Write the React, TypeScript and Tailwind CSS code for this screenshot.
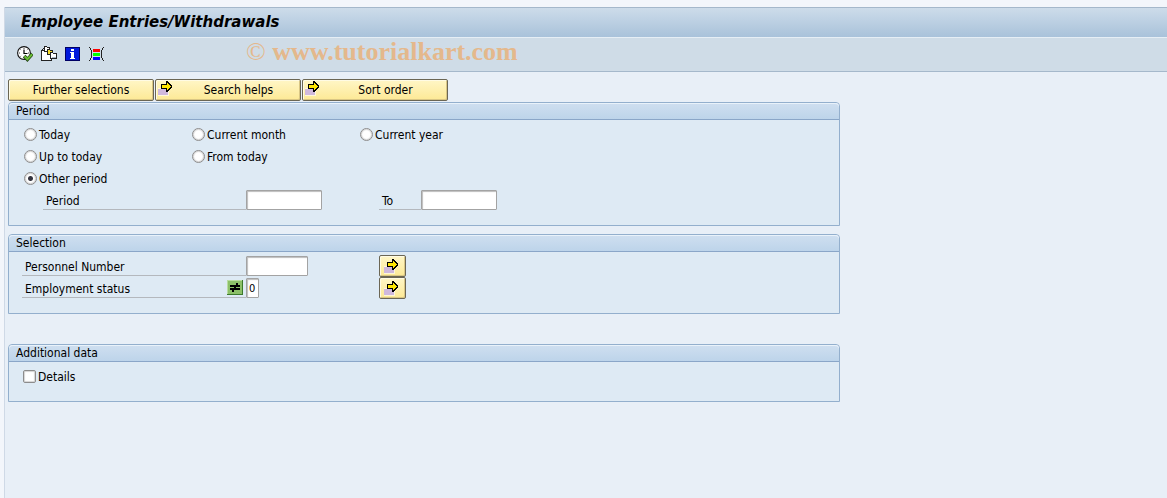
import type { ReactNode } from 'react';

function ExecuteIcon() {
  return (
    <svg width="16" height="16" viewBox="0 0 16 16" aria-hidden="true">
      <circle cx="7" cy="7" r="6.4" fill="#fff" stroke="#111" strokeWidth="1.1" />
      <path d="M7 2v1M7 11v1M2 7h1M11 7h1M3.5 3.5l.6.6M10.5 3.5l-.6.6M3.5 10.5l.6-.6" stroke="#444" strokeWidth="1" />
      <path d="M7 3.5v4h3.5" fill="none" stroke="#000" strokeWidth="1.2" />
      <path d="M7.2 10l3.2 3.4 5-5.5" fill="none" stroke="#1c3a10" strokeWidth="3.4" />
      <path d="M7.6 10.3l2.8 3 4.7-5.1" fill="none" stroke="#6abf35" strokeWidth="2.1" />
    </svg>
  );
}

function VariantIcon() {
  return (
    <svg width="16" height="16" viewBox="0 0 16 16" shapeRendering="crispEdges" aria-hidden="true">
      <path d="M3 2h2v2h5v11H1V4h2z" fill="#fff" />
      <path d="M0 4h1v11H0zM0 14h11v1H0zM10 12h1v3h-1zM1 3h1v1H1zM2 2h1v1H2zM3 1h1v3H3zM1 4h3v1H1z" fill="#222" />
      <path d="M3 0h3v1h3v5H3z" fill="#222" />
      <path d="M4 1h2v1h2v3H4z" fill="#fff" />
      <path d="M6 3h3v1h3v5H6z" fill="#222" />
      <path d="M7 4h2v1h2v3H7z" fill="#f7dc28" />
      <path d="M9 6h3v1h4v6H9z" fill="#222" />
      <path d="M10 7h2v1h3v4h-5z" fill="#fff" />
      <path d="M11 11h4v1h-4z" fill="#aab6c4" />
    </svg>
  );
}

function InfoIcon() {
  return (
    <svg width="16" height="16" viewBox="0 0 16 16" shapeRendering="crispEdges" aria-hidden="true">
      <path d="M0 1h15v14H0z" fill="#000064" />
      <path d="M1 2h13v12H1z" fill="#0018dc" />
      <path d="M6 3h3v2H6zM5 6h4v6h1v1H5v-1h1V7H5z" fill="#fff" />
    </svg>
  );
}

function SelectionOptionsIcon() {
  return (
    <svg width="16" height="16" viewBox="0 0 16 16" shapeRendering="crispEdges" aria-hidden="true">
      <path d="M0 1h1v1H0zM1 2h1v2H1zM2 4h1v8H2zM1 12h1v2H1zM0 14h1v1H0zM14 1h1v1h-1zM13 2h1v2h-1zM12 4h1v8h-1zM13 12h1v2h-1zM14 14h1v1h-1z" fill="#222" />
      <path d="M4 3h7v3H4z" fill="#f00" />
      <path d="M4 7h7v3H4z" fill="#0f0" />
      <path d="M4 11h7v3H4z" fill="#00f" />
    </svg>
  );
}

function ArrowIcon() {
  return (
    <svg width="15" height="15" viewBox="0 0 15 15" shapeRendering="crispEdges" aria-hidden="true">
      <path d="M0 7h11v8H0z" fill="#fff" opacity=".6" />
      <path d="M0 8h10v6H0z" fill="#d0b9dc" />
      <path d="M3 3h5V0h2v1h1v1h1v1h1v1h1v3h-1v1h-1v1h-1v1h-1v1H8V8H3z" fill="#000" />
      <path d="M4 4h5V2h1v1h1v1h1v1h1v1h-1v1h-1v1h-1v1H9V7H4z" fill="#ffe600" />
    </svg>
  );
}

function NotEqualIcon() {
  return (
    <svg width="16" height="15" viewBox="0 0 16 15" shapeRendering="crispEdges" role="img" aria-label="Not equal">
      <path d="M0 0h16v15H0z" fill="#3c7a2c" />
      <path d="M0 0h15v14H0z" fill="#b8dca0" />
      <path d="M1 1h14v13H1z" fill="#8cc068" />
      <path d="M3 5h10v2H3zM3 8h10v2H3zM9 3h2v2H9zM8 5h2v2H8zM7 7h2v1H7zM6 8h2v2H6zM5 10h2v2H5z" fill="#000" />
    </svg>
  );
}

const yellow =
  'rounded-xs border border-[#6b6654] bg-linear-to-b from-[#fff6c6] to-[#fde995] shadow-[inset_1px_1px_0_#fffbe4,inset_-1px_-1px_0_#d9c684]';

function ActionButton({ arrow, children }: { arrow?: boolean; children: ReactNode }) {
  return (
    <button type="button" className={`flex h-[22px] w-[146px] items-center px-0.5 ${yellow}`}>
      {arrow && (
        <span className="mr-1.5 -mt-1 shrink-0">
          <ArrowIcon />
        </span>
      )}
      <span className="grow text-center">{children}</span>
    </button>
  );
}

function MultipleButton({ label }: { label: string }) {
  return (
    <button type="button" aria-label={label} className={`flex h-[22px] w-[27px] items-center pl-1 ${yellow}`}>
      <ArrowIcon />
    </button>
  );
}

function Panel({ title, className, children }: { title: string; className?: string; children: ReactNode }) {
  return (
    <section className={`max-w-[832px] rounded-t-sm border border-[#93afcd] bg-[#deeaf4] ${className ?? ''}`}>
      <h2 className="h-[17px] rounded-t-sm border-b border-[#8aa6c8] bg-linear-to-b from-[#cfdff0] to-[#bdd4ea] px-[7px] leading-4 shadow-[inset_0_1px_0_#e9f2fa]">
        {title}
      </h2>
      {children}
    </section>
  );
}

function Radio({ label, checked }: { label: string; checked?: boolean }) {
  return (
    <label className="flex h-[22px] items-center gap-0.5">
      <input
        type="radio"
        name="period"
        defaultChecked={checked}
        className="size-[13px] appearance-none rounded-full border border-[#8c8c8c] bg-white shadow-[inset_0_0_1px_1px_#d4d4d4] checked:bg-[radial-gradient(circle,#34343f_0_2px,#fff_3px)]"
      />
      <span className="pt-0.5">{label}</span>
    </label>
  );
}

const field =
  'h-5 rounded-[1px] border border-[#a3a3a3] bg-white shadow-[inset_1px_1px_1px_#bdbdbd] px-0.5 outline-none';
const caption = 'flex h-5 items-center border-b border-[#b4b8bd] px-[3px]';

export default function App() {
  return (
    <div className="flex min-h-screen flex-col bg-[#f3f6fb] pt-[7px] pl-1 font-['DejaVu_Sans_Condensed','DejaVu_Sans',sans-serif] text-[12px] leading-4 text-black">
      <div className="grow border-l border-[#cfd9e6] bg-[#e8eff7]">
        <header className="border-b border-[#a5b8cb] bg-[#cfdce7]">
          <h1 className="flex h-[31px] items-center border-t border-b border-t-[#a5b8cb] border-b-[#e6eef5] bg-linear-to-b from-[#cddcea] to-[#a9c2da] px-4 pb-0.5 font-['DejaVu_Sans',sans-serif] text-[15px] font-bold italic">
            Employee Entries/Withdrawals
          </h1>
          <div className="flex h-[33px] items-center px-3 pb-0.5">
            <div className="flex gap-2">
              <button type="button" aria-label="Execute"><ExecuteIcon /></button>
              <button type="button" aria-label="Get variant"><VariantIcon /></button>
              <button type="button" aria-label="Program documentation"><InfoIcon /></button>
              <button type="button" aria-label="Dynamic selections"><SelectionOptionsIcon /></button>
            </div>
            <p className="ml-[141px] pb-1 font-['Liberation_Serif',serif] text-[26px] leading-7 whitespace-nowrap text-[#e4b88c]">
              © <b>www.tutorialkart.com</b>
            </p>
          </div>
        </header>

        <main className="px-[3px] pt-[7px]">
          <div className="mb-px flex gap-px">
            <ActionButton>Further selections</ActionButton>
            <ActionButton arrow>Search helps</ActionButton>
            <ActionButton arrow>Sort order</ActionButton>
          </div>

          <Panel title="Period">
            <div className="px-[15px] pt-[3px] pb-3.5">
              <div className="grid grid-cols-[168px_168px_168px]">
                <Radio label="Today" />
                <Radio label="Current month" />
                <Radio label="Current year" />
                <Radio label="Up to today" />
                <Radio label="From today" />
              </div>
              <Radio label="Other period" checked />
              <div className="flex h-[22px] items-center pl-[19px]">
                <label htmlFor="from" className={`${caption} w-[203px] pt-0.5`}>Period</label>
                <input id="from" className={`${field} w-[76px]`} />
                <label htmlFor="to" className={`${caption} ml-[57px] w-[42px] pt-0.5`}>To</label>
                <input id="to" className={`${field} w-[76px]`} />
              </div>
            </div>
          </Panel>

          <Panel title="Selection" className="mt-2">
            <div className="px-[13px] pt-[3px] pb-3.5">
              <div className="flex items-center">
                <label htmlFor="number" className={`${caption} w-[224px] pt-0.5`}>Personnel Number</label>
                <div className="flex w-[133px]">
                  <input id="number" className={`${field} w-[62px]`} />
                </div>
                <MultipleButton label="Multiple selection for personnel number" />
              </div>
              <div className="flex items-center">
                <div className={`${caption} w-[224px] justify-between`}>
                  <label htmlFor="status" className="pt-0.5">Employment status</label>
                  <NotEqualIcon />
                </div>
                <div className="flex w-[133px]">
                  <input id="status" defaultValue="0" className={`${field} w-[13px] text-[11px]`} />
                </div>
                <MultipleButton label="Multiple selection for employment status" />
              </div>
            </div>
          </Panel>

          <Panel title="Additional data" className="mt-[30px]">
            <div className="px-3.5 pt-[3px] pb-3.5">
              <label className="flex h-[22px] items-center gap-0.5">
                <input
                  type="checkbox"
                  className="size-[13px] appearance-none rounded-xs border border-[#8c8c8c] bg-white shadow-[inset_0_0_1px_1px_#d4d4d4] checked:bg-[#34343f]"
                />
                <span className="pt-0.5">Details</span>
              </label>
            </div>
          </Panel>
        </main>
      </div>
    </div>
  );
}
